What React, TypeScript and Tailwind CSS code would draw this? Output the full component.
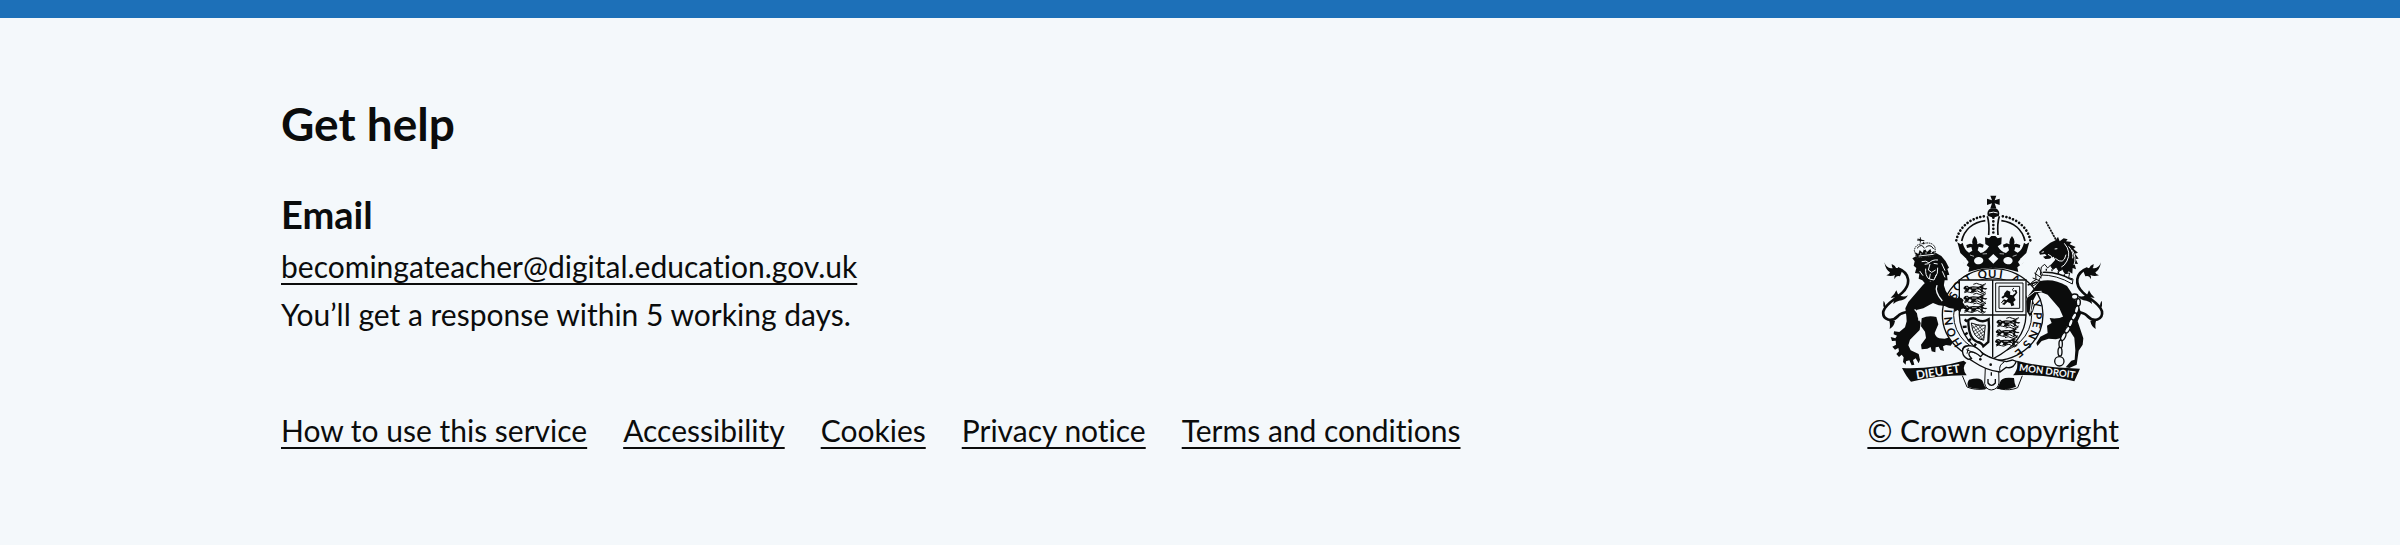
import React from 'react';

const INK = '#0b0c0c';
const PAPER = '#f4f8fb';

const footerLinks = [
  'How to use this service',
  'Accessibility',
  'Cookies',
  'Privacy notice',
  'Terms and conditions',
];

const linkClass =
  'underline decoration-2 underline-offset-[5px] hover:decoration-4';

// Letters of the garter motto: glyph, x, y, rotation.
const motto: [string, number, number, number][] = [
  ['H', 328, 490, -122],
  ['O', 312, 460, -108],
  ['N', 304, 426, -96],
  ['I', 303, 397, -86],
  ['S', 318, 350, -62],
  ['O', 331, 322, -48],
  ['T', 362, 300, -28],
  ['Q', 404, 287, -10],
  ['U', 434, 285, 0],
  ['I', 460, 287, 8],
  ['A', 504, 302, 28],
  ['Y', 566, 376, 74],
  ['P', 569, 410, 92],
  ['E', 566, 437, 102],
  ['N', 556, 467, 114],
  ['S', 538, 496, 128],
  ['E', 514, 521, 142],
];

function MarchingLion({ x, y }: { x: number; y: number }) {
  return (
    <g transform={`translate(${x} ${y})`}>
      <path
        d="M0 3l5-6 7-1 5 4 12-2 16 1 12-5 8 2-7 3 4 4 10 1-4 4-10-2 1 6 6 4h-11l-4-8-10-1-7 8H22l3-6-6-3-6 8H2l5-6-5-1z"
        fill={INK}
      />
      <path d="M30-8q10-6 18 0t20-2M3 17q9-5 16-1t15-2 16 2 17-1" fill="none" stroke={INK} strokeWidth="3" />
      <path d="M8 0l6 3M26 3h14M48 3l6 3" stroke={PAPER} strokeWidth="2" />
    </g>
  );
}

function HalfCrown() {
  return (
    <g>
      <path d="M326 184C334 146 366 116 416 111" fill="none" stroke={INK} strokeWidth="8" strokeLinecap="round" strokeDasharray="0.1 10.5" />
      <path d="M342 186C350 152 376 130 413 125" fill="none" stroke={INK} strokeWidth="5" />
      <path d="M419 112q7 22 4 56" fill="none" stroke={INK} strokeWidth="5" />
      <path
        d="M329 190l10 6 6-5q5 22 19 30l10-6-3-11-13 3-2-9 11-4 8 2q-5-12 6-25 11 13 7 25l9-3 11 4-2 9-13-3-3 11 9 8q15-3 25-20l-11-7-1-20 12 3 7-7h10v95q-42 0-79 13l3-14-18-14 9-12-18-17z"
        fill={INK}
      />
      <path d="M345 249l9-11 9 11-8 13z" fill={PAPER} />
      <ellipse cx="393" cy="245" rx="14" ry="11" fill={PAPER} transform="rotate(-8 393 245)" />
      <path d="M367 228l12 4M405 225l13-1" stroke={PAPER} strokeWidth="2" fill="none" />
    </g>
  );
}

function Tail() {
  return (
    <g>
      <path d="M150 268C188 282 190 316 164 341C142 362 113 374 107 397C103 423 133 431 151 411C158 402 168 402 180 398" fill="none" stroke={INK} strokeWidth="8" />
      <path
        d="M110 250q6 17 20 18l24-1 10 7-7 18q-12-4-16 9-3-7 1-13-11 5-26 1 10-3 11-9-13-7-17-30zM132 255q10 4 15 14l-9 2q-7-6-6-16zM151 346q14 12 30 3-9 16-27 16-10 2-17 10 0-14 7-21-8 3-15 2 12-9 17-22zM108 365q7 9 4 24-8-7-4-24zM122 421q7 9 4 29 13-7 16-24z"
        fill={INK}
      />
    </g>
  );
}

function RoyalArms() {
  return (
    <svg
      viewBox="100 48 672 590"
      className="h-auto w-56"
      role="img"
      aria-label="Royal coat of arms"
    >
      <Tail />
      <g transform="translate(870 0) scale(-1 1)">
        <Tail />
      </g>

      {/* Rear legs */}
      <path
        d="M222 418q20-10 44-4l6 22-11 26q2 12 14 16l16 1 20-6 4 18-6 9-14-2-9 4 3 14-11-3-5-10-9 2-1 15-11-3-3-13-10 5-17 2-2-14 15-20-3-19-12-16z"
        fill={INK}
      />
      <path
        d="M606 417q26 5 52-9l4 24-19 44-18 5-22-2-21 7-13 15-3-9 12-19 22-11-2-22 14-8z"
        fill={INK}
      />

      {/* Garter */}
      <ellipse cx="435" cy="407" rx="151" ry="138" fill={PAPER} stroke={INK} strokeWidth="4" />
      <ellipse cx="435" cy="409" rx="117" ry="112" fill={PAPER} stroke={INK} strokeWidth="3" />
      <g fill={INK} fontFamily="Lato, sans-serif" fontSize="34" fontWeight="700" textAnchor="middle">
        {motto.map(([glyph, x, y, angle], i) => (
          <text key={i} x={x} y={y} dy="11" transform={`rotate(${angle} ${x} ${y})`}>
            {glyph}
          </text>
        ))}
      </g>

      {/* Shield */}
      <path d="M335 303h200v105q-2 82-100 132-98-50-100-132z" fill={PAPER} stroke={INK} strokeWidth="4" />
      <path d="M435 303v232M335 408h200" stroke={INK} strokeWidth="4" />
      <MarchingLion x={347} y={324} />
      <MarchingLion x={347} y={354} />
      <MarchingLion x={347} y={383} />
      <MarchingLion x={446} y={426} />
      <MarchingLion x={444} y={455} />
      <MarchingLion x={442} y={484} />
      <path d="M444 312h82v86h-82zM454 322h62v66h-62z" fill="none" stroke={INK} strokeWidth="3" />
      <path
        d="M470 343l8-9 10 4-1 9 8 2 9-8-5-7 7-1 3 8-10 13 5 9-7 6 3 10-9 3-3-9-9-4-9 9-7-3 9-7-8-2 5-5 8 3 4-6-9-5-6 6-5-4 8-6z"
        fill={INK}
      />
      <path d="M498 338q-8-8 1-11M466 366l-5 6M479 344l4 3" stroke={INK} strokeWidth="3" fill="none" />
      {/* Harp */}
      <path d="M361 424q14-11 27-2 19 10 35-1l1 24-2 44-15 13q-4-11-18-13-27-10-27-65z" fill={PAPER} stroke={INK} strokeWidth="7" />
      <path d="M371 432q20 9 42 7l-5 45q-33-6-37-52z" fill="none" stroke={INK} strokeWidth="3" />
      <path d="M374 448l20-11M377 458l30-19M380 466l31-20M385 473l25-17M391 478l19-12M398 482l11-7M381 435l28 40M374 438l31 45M392 437l18 25" stroke={INK} strokeWidth="2" />
      <path d="M359 428l-8-7M357 443l-12 1M360 461l-9 6M370 480l-9 6M385 494l-5 8" stroke={INK} strokeWidth="7" />

      {/* Lion */}
      <path
        d="M237 307l48 1 9 27 9 15 24 8 13-2 8 7-3 7 7 10-2 8-9 2-3 10-8-7-10 6-1-10-15-2-13-6-18-2-17-7-29 16-21 5 4 22 9 17-3 21-29 29-5 17 7 15 24 11 4 17-4 11-9-15-8 5 4 14-8 2-7-15-10 3-1 10-8-8 2-14-6-8-8 7-8-9 8-8-2-10-10 5-8-9 11-6-1-12-11 1-4-12 14 4 5-8-10-4 1-9 16 2 17-14 5-18-1-15-3-24 9-19 43-50z"
        fill={INK}
      />
      <path d="M268 318q-8 21 16 48M201 391l15 18-3 16" fill="none" stroke={PAPER} strokeWidth="4" />
      <path
        d="M213 228l52-6 16 9 13 16 10 19-5 4 6 17-7 2 2 15-9 0-3 17-13-9-12 9-15-16-11 14-13-15-11-5 2-15-13-2 4-15-8-7 3-13-7-9 11-6z"
        fill={INK}
      />
      <path d="M222 248q14-5 22 4 10-11 27-9M231 256l12-2M258 253l12 2M247 255l-5 18 10 7 12-7M234 269q-2 20 10 31M270 266q2 18-8 30M248 284l-3 16 14 3 7-16M282 253l10 22M284 277l8 18M216 276l10 14" fill="none" stroke={PAPER} strokeWidth="3" />
      <path d="M208 238l-8-23q2-17 19-20l10-2q25-5 33 12l1 21-5 6q-26-1-50 6z" fill={PAPER} stroke={INK} strokeWidth="3" strokeDasharray="5 2" />
      <path d="M208 237l-5-17 9 5 4-12 9 8 5-14 8 12 10-9 4 10 8-4 2 16q-28-1-54 5z" fill={INK} />
      <path d="M213 231l45-5M217 225h4M233 222h4M249 221h4M227 193l4 20" stroke={PAPER} strokeWidth="3" />
      <path d="M228 196l-1-7M208 183l22 2M218 175v16M210 180l17 5M208 208q14-17 22 0M234 205q14-12 24 5" fill="none" stroke={INK} strokeWidth="3" />

      {/* Unicorn */}
      <path d="M595 128l33 60" stroke={INK} strokeWidth="5" strokeDasharray="7 2" />
      <path d="M624 184l7-11 5 14 12-9 12 3-5 6 17 2-6 7 18 8-7 5 14 12-9 3 11 15-9 1 7 15-10-1 4 17-10-4-1 17-11-7-6 9-24-10-31 2 7-20 14-16-5-9-13 6-12 1-7-7 11-3-5-5-15 2-3-8 11-10 23-18z" fill={INK} />
      <path d="M589 218l-7 2M601 226q14 5 12 13M621 210l8-1M650 193q22 26 8 53-8 15-17 18M663 202q16 18 12 36M674 214q13 20 5 44M623 238q25 22 32-11" fill="none" stroke={PAPER} strokeWidth="3" />
      <path d="M581 264l10-8 9 11 8-8 8 12 10-7 8 13 11-6 7 13 14-2-3 14 13 4-2 15q-48-28-96-27z" fill={PAPER} stroke={INK} strokeWidth="3" />
      <path d="M585 280q48-2 88 23M596 269v6M613 271v6M632 277v6M650 286v6" fill="none" stroke={INK} strokeWidth="4" />
      <path
        d="M575 307q41-11 83 14l12 18 19 34 12 30-11 24 17 51-2 19-12 18-6 42-22 10-11-2 17-20 10-3 2-28-3-38-23-36-9-23-13-29-35-41-19-7-13 3-12 22 5 16-5 16-9 16-9-15-2-31 7-18z"
        fill={INK}
      />
      <path d="M542 353l19-15 21-1M552 363l-5 39M557 375l-5 22" fill="none" stroke={PAPER} strokeWidth="3" />
      <path d="M573 265l11 21-16 27-12 8-4-11 13-8-1-20zM560 282l22 15M555 297l23 9" fill="none" stroke={INK} strokeWidth="3" />
      <path d="M540 318l28-9" stroke={INK} strokeWidth="5" />

      {/* Chain */}
      <g fill={PAPER} stroke={INK} strokeWidth="4">
        <ellipse cx="681" cy="353" rx="10" ry="8" />
        <ellipse cx="692" cy="370" rx="6" ry="11" />
        <ellipse cx="687" cy="392" rx="6" ry="12" transform="rotate(14 687 392)" />
        <ellipse cx="679" cy="413" rx="6" ry="12" transform="rotate(28 679 413)" />
        <ellipse cx="669" cy="432" rx="6" ry="12" transform="rotate(20 669 432)" />
        <ellipse cx="659" cy="452" rx="6" ry="11" transform="rotate(34 659 452)" />
        <ellipse cx="647" cy="473" rx="6" ry="13" transform="rotate(25 647 473)" />
        <ellipse cx="639" cy="495" rx="5" ry="12" />
        <ellipse cx="637" cy="518" rx="6" ry="13" />
        <circle cx="635" cy="547" r="14" />
      </g>

      {/* Crown */}
      <HalfCrown />
      <g transform="translate(874 0) scale(-1 1)">
        <HalfCrown />
      </g>
      <path d="M437 225l15 14-15 15-15-15z" fill={PAPER} />
      <path d="M437 116v50" stroke={INK} strokeWidth="8" strokeLinecap="round" strokeDasharray="0.1 11" />
      <path d="M420 110q-4-15 10-22h14q14 7 10 22l-17 6z" fill={INK} />
      <path d="M424 102q13-5 26 0" fill="none" stroke={PAPER} strokeWidth="3" />
      <path d="M428 50h18l-5 14 15-5v19l-15-5 5 15h-18l5-15-15 5V59l15 5z" fill={INK} />

      {/* Scroll */}
      <path d="M163 567q94 4 185-22l8 6q-16 14 1 38-80-1-167 19-14-15-27-41z" fill={INK} />
      <path d="M508 545q82 22 189 24l-17 38q-82-22-184-18 17-18 12-44z" fill={INK} />
      <path d="M344 590l14 34q22 10 55 6M524 590l-14 36q-22 10-52 4" fill="none" stroke={INK} strokeWidth="3" />
      <path d="M364 602q38-10 42 7 3 14 12 20-35 4-56-5-6-10 2-22zM499 597q-39-5-42 13-3 12-11 19 34 6 59-6-5-9-6-26z" fill={INK} />
      <g fill={PAPER} fontFamily="Lato, sans-serif" fontWeight="700">
        <text x="207" y="601" fontSize="35" transform="rotate(-9 207 601)">
          DIEU ET
        </text>
        <text x="513" y="575" fontSize="29" transform="rotate(8 513 575)">
          MON DROIT
        </text>
      </g>

      {/* Strap and buckle */}
      <path d="M413 566l-2 48q4 18 20 19 20-2 23-21l-1-42z" fill={PAPER} stroke={INK} strokeWidth="3" />
      <path d="M431 580v10M421 600v12q10 14 22 0v-12" fill="none" stroke={INK} strokeWidth="4" />
      <path d="M382 508q39 33 95 40l17-5 12 4q-9 24-30 18l-19 14q-40-4-78-30-30-18-34-33-2-17 17-15z" fill={PAPER} stroke={INK} strokeWidth="4" />
      <path d="M346 525q-7-23 20-25 22 1 40 25l-7 8q-20-17-31-14-10 5 3 19l-9 3q-14-7-16-16z" fill={PAPER} stroke={INK} strokeWidth="4" />
      <path d="M356 512l25 10M362 507l-4 17M470 549q-18 9-13 29" stroke={INK} strokeWidth="3" fill="none" />
      <circle cx="398" cy="541" r="4" fill={INK} />
      <circle cx="429" cy="557" r="4" fill={INK} />
    </svg>
  );
}

export default function App() {
  return (
    <footer className="border-t-18 border-[#1d70b8] bg-[#f4f8fb] px-8 pt-[74px] pb-[91px] font-[Lato,sans-serif] text-[30px] leading-[48px] text-[#0b0c0c] [font-variant-ligatures:none]">
      <div className="mx-auto flex w-full max-w-[1838px] flex-wrap items-end justify-between gap-8">
        <div>
          <h2 className="mb-[34px] text-[46px] leading-[64px] font-bold">Get help</h2>
          <h3 className="text-[38px] leading-[48px] font-bold">Email</h3>
          <p className="mt-1">
            <a href="mailto:becomingateacher@digital.education.gov.uk" className={linkClass}>
              becomingateacher@digital.education.gov.uk
            </a>
          </p>
          <p>You’ll get a response within 5 working days.</p>
          <ul className="mt-[68px] flex flex-wrap gap-x-9">
            {footerLinks.map((label) => (
              <li key={label}>
                <a href="#" className={linkClass}>
                  {label}
                </a>
              </li>
            ))}
          </ul>
        </div>
        <a href="#" className={`flex flex-col items-center gap-3.5 ${linkClass}`}>
          <RoyalArms />
          <span>© Crown copyright</span>
        </a>
      </div>
    </footer>
  );
}
